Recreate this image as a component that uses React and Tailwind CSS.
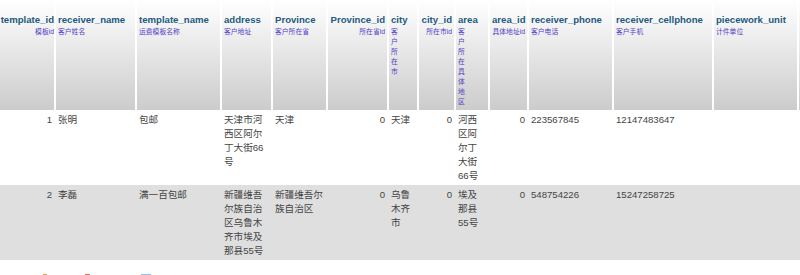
const columns = [
  { name: "template_id", sub: "模板id", width: "w-[56px]", num: true },
  { name: "receiver_name", sub: "客户姓名", width: "w-[81px]" },
  { name: "template_name", sub: "运费模板名称", width: "w-[85px]" },
  { name: "address", sub: "客户地址", width: "w-[51px]" },
  { name: "Province", sub: "客户所在省", width: "w-[55px]" },
  { name: "Province_id", sub: "所在省id", width: "w-[61px]", num: true },
  { name: "city", sub: "客户所在市", width: "w-[30px]", narrow: true },
  { name: "city_id", sub: "所在市id", width: "w-[37px]", num: true },
  { name: "area", sub: "客户所在具体地区", width: "w-[34px]", narrow: true },
  { name: "area_id", sub: "具体地址id", width: "w-[39px]", num: true },
  { name: "receiver_phone", sub: "客户电话", width: "w-[85px]" },
  { name: "receiver_cellphone", sub: "客户手机", width: "w-[100px]" },
  { name: "piecework_unit", sub: "计件单位", width: "w-[85px]" },
  // next column is scrolled out of view, only its edge shows
  { name: "", sub: "", width: "w-[90px]" },
];

const rows = [
  [
    "1",
    "张明",
    "包邮",
    "天津市河西区阿尔丁大街66号",
    "天津",
    "0",
    "天津",
    "0",
    "河西区阿尔丁大街66号",
    "0",
    "223567845",
    "12147483647",
    "",
    "",
  ],
  [
    "2",
    "李磊",
    "满一百包邮",
    "新疆维吾尔族自治区乌鲁木齐市埃及那县55号",
    "新疆维吾尔族自治区",
    "0",
    "乌鲁木齐市",
    "0",
    "埃及那县55号",
    "0",
    "548754226",
    "15247258725",
    "",
    "",
  ],
];

export default function App() {
  return (
    <div className="h-[275px] w-[800px] overflow-hidden bg-white font-['Liberation_Sans','Noto_Sans_CJK_SC',sans-serif]">
      <table className="w-[889px] table-fixed border-separate border-spacing-0">
        <thead>
          <tr>
            {columns.map((col, i) => (
              <th
                key={i}
                className={`${col.width} border-r-2 border-white bg-gradient-to-b from-white to-[#cccccc] pb-[3px] pt-[13px] align-top font-normal ${
                  i === 0 ? "px-0" : "px-[2px]"
                } ${col.num ? "text-right" : "text-left"}`}
              >
                <div className="whitespace-nowrap text-[9.6px] font-bold leading-[13px] text-[#235a81]">
                  {col.name}
                </div>
                <div
                  className={`mt-[1px] text-[6.8px] leading-[10px] text-[#5040c8] ${
                    col.narrow ? "w-[8px]" : ""
                  }`}
                >
                  {col.sub}
                </div>
              </th>
            ))}
          </tr>
        </thead>
        <tbody>
          {rows.map((row, r) => (
            <tr key={r} className={r % 2 ? "bg-[#dfdfdf]" : "bg-white"}>
              {row.map((cell, c) => (
                <td
                  key={c}
                  className={`pb-[2px] pl-[2px] pr-[4px] pt-[3px] align-top text-[9.6px] leading-[14px] text-[#444444] ${
                    columns[c].num ? "text-right" : "text-left"
                  }`}
                >
                  {cell}
                </td>
              ))}
            </tr>
          ))}
        </tbody>
      </table>
      <div className="mt-[14px] flex items-start">
        <span className="ml-[43px] h-[10px] w-[4px] bg-[#e8a050]" />
        <span className="ml-[38px] h-[10px] w-[5px] bg-[#e07070]" />
        <span className="ml-[51px] h-[10px] w-[10px] bg-[#9cbbe8]" />
      </div>
    </div>
  );
}
